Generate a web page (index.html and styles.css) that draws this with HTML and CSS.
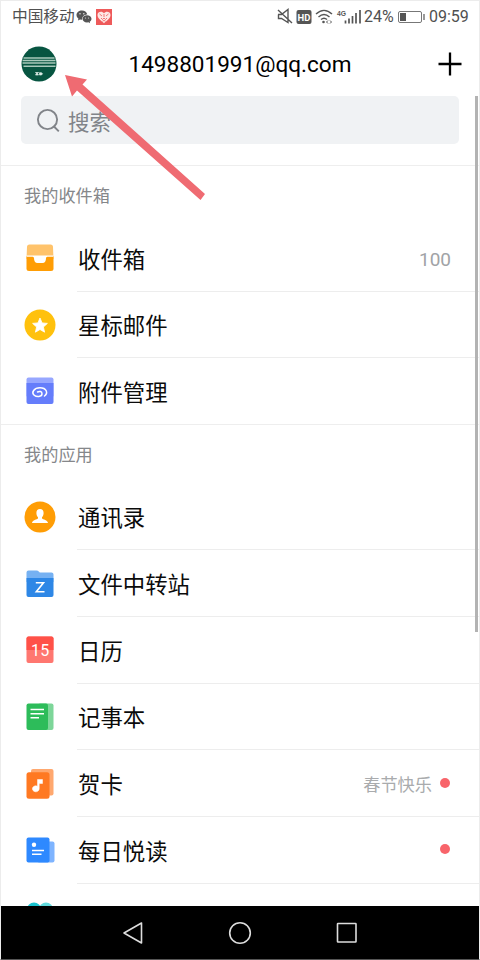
FILE: index.html
```html
<!DOCTYPE html>
<html lang="zh-CN">
<head>
<meta charset="utf-8">
<title>邮箱</title>
<link rel="stylesheet" href="styles.css">
</head>
<body>
<div class="phone">
  <div class="status">
    <span class="carrier">中国移动</span>
    <svg class="wechat" width="16" height="14" viewBox="0 0 16 14"><path d="M6 0.5C2.8.5.5 2.5.5 5c0 1.400.7 2.600 1.900 3.500L2 10.500l2-1.100 2 .3C6 6.500 8.300 4.600 11.300 4.500 10.700 2.100 8.600.5 6 .5Z" fill="#555"/><path d="M11 5.200c-2.600 0-4.500 1.600-4.500 3.600s1.900 3.700 4.500 3.700l1.400-.2 1.700 1-.4-1.500c1.100-.7 1.800-1.800 1.800-3 0-2-1.900-3.600-4.500-3.600Z" fill="#555"/><circle cx="4" cy="3.800" r=".8" fill="#ddd"/><circle cx="7.800" cy="3.800" r=".8" fill="#ddd"/><circle cx="9.500" cy="8" r=".6" fill="#ddd"/><circle cx="12.500" cy="8" r=".6" fill="#ddd"/></svg>
    <svg class="heart" width="16" height="16" viewBox="0 0 16 16"><rect width="16" height="16" fill="#ee5a5a"/><path d="M8 4.200C6.500 1.800 1.500 2 1.500 6c0 3.500 4 6 6.500 8.200C10.500 12 14.500 9.500 14.500 6 14.500 2 9.500 1.800 8 4.200Z" fill="#fde8e6"/><path d="m3.500 5 2.500 2m6.500-2L10 7M5 9l1.500 1.500L8 9l1.500 1.500L11 9M8 5v3M6.500 12.200l1.500-.8 1.500.8" stroke="#ee5a5a" stroke-width=".8" fill="none"/></svg>
    <span class="spring"></span>
    <svg class="signals" width="86" height="18" viewBox="0 0 86 18" fill="none" stroke="#555" stroke-width="1.400">
      <path d="M1 6.500h3.500L11 1.500v13L4.500 10.500H1.500V6.500M1 2l14 13"/>
      <rect x="19.500" y="2" width="15" height="14" rx="2" fill="#555" stroke="none"/><text x="27" y="12.500" class="hd">HD</text>
      <path d="M39 6c5-4.800 11-4.800 16 0M41.500 9c3.500-3.300 7.500-3.300 11 0M44 11.500c2-1.800 4-1.800 6 0"/><circle cx="46.500" cy="14" r="1.300" fill="#555" stroke="none"/><path d="m51 12.500-1.500 1.500 1.500 1.500m2-3 1.500 1.500-1.500 1.500" stroke-width="1"/>
      <text x="60" y="8" class="fg" textLength="9" lengthAdjust="spacingAndGlyphs">4G</text>
      <path d="M68.500 12.500v3M72 10.500v5M75.500 8v7.500M79 5v10.500M83 2v13.500" stroke-width="1.700"/>
    </svg>
    <span class="percent">24%</span>
    <svg class="battery" width="28" height="14" viewBox="0 0 28 14"><rect x="1.500" y="1.500" width="23" height="11" rx="1.500" fill="none" stroke="#777"/><rect x="3" y="3" width="6" height="8" fill="#555"/><path d="M27 4v6" stroke="#777" stroke-width="1.500"/></svg>
    <span class="time">09:59</span>
  </div>
  <header class="header">
    <svg class="avatar" width="36" height="36" viewBox="0 0 36 36"><circle cx="18" cy="18" r="17.500" fill="#075541"/><path d="M2.500 12h31M1.500 14.500h33M1.500 17h33M2.500 20.300h32" stroke="#a9c9bb" stroke-width="1.500"/><path d="M14.500 26.500h3l-1 1.200 1 1.300h-3l1-1.300zm4 .2h2l1 1.100-1 1.200h-2z" fill="#dcebe5" stroke="#dcebe5" stroke-width=".7"/></svg>
    <h1 class="account">1498801991@qq.com</h1>
    <svg class="plus" width="24" height="24" viewBox="0 0 24 24"><path d="M.5 12h23M12 .5v23" stroke="#000" stroke-width="2.300"/></svg>
  </header>
  <main class="content">
    <div class="search">
      <svg width="24" height="24" viewBox="0 0 24 24" fill="none" stroke="#818489" stroke-width="1.900"><circle cx="11.500" cy="11.500" r="9.600"/><path d="m17.500 18 5.300 5.300"/></svg>
      <span>搜索</span>
    </div>
    <section class="group">
      <h2>我的收件箱</h2>
      <div class="row">
        <svg class="icon" viewBox="0 0 32 32"><path d="M5.500 2.500h21Q29 2.500 29 5l.5 12h-27L3 5Q3 2.500 5.500 2.500Z" fill="#ffc36b"/><path d="M2.500 14h27v12.500Q29.500 29 27 29H5Q2.500 29 2.500 26.500Z" fill="#ff9d05"/><path d="M2.500 13.500h27v1.300h-6.200q-1.300 0-1.300 1.500 0 4.700-3.500 4.700h-5Q10 21 10 16.300q0-1.500-1.300-1.500H2.500Z" fill="#fff"/></svg>
        <span class="label">收件箱</span><span class="count">100</span>
      </div>
      <div class="row">
        <svg class="icon" viewBox="0 0 32 32"><circle cx="16" cy="16" r="15.500" fill="#ffc10d"/><path d="m16 9 2.100 4.900 5.300.5-4 3.600 1.200 5.200-4.600-2.700-4.600 2.700 1.200-5.200-4-3.600 5.300-.5Z" fill="#fff" stroke="#fff" stroke-width=".8" stroke-linejoin="round"/></svg>
        <span class="label">星标邮件</span>
      </div>
      <div class="row">
        <svg class="icon" viewBox="0 0 32 32"><rect x="2.500" y="2.500" width="27" height="20" rx="2" fill="#97a7ff"/><path d="M2.500 8h27v19q0 2-2 2h-23q-2 0-2-2Z" fill="#657dfb"/><path d="M20.500 21C24.500 18 22.500 12.800 16 12.800 10 12.800 7 17.500 10.200 20.200 12.300 22 18 22.300 18 18.800 18 16.300 15.500 16 13.500 17" fill="none" stroke="#fff" stroke-width="1.500" stroke-linecap="round"/></svg>
        <span class="label">附件管理</span>
      </div>
    </section>
    <section class="group">
      <h2>我的应用</h2>
      <div class="row">
        <svg class="icon" viewBox="0 0 32 32"><circle cx="16" cy="16" r="15.500" fill="#ff9d05"/><path d="M16 8c2.300 0 3.600 1.500 3.600 4 0 2-.7 3.200-1.600 4.200v1.300c.8 1 5.800 1.500 6 4.500H8c.2-3 5.200-3.500 6-4.500v-1.300c-.9-1-1.600-2.200-1.600-4.200 0-2.500 1.300-4 3.600-4Z" fill="#fff"/></svg>
        <span class="label">通讯录</span>
      </div>
      <div class="row">
        <svg class="icon" viewBox="0 0 32 32"><path d="M4.500 2.500h8q1.500 0 2.500 1.300l.8.700H27.500q2 0 2 2V14h-27V4.500q0-2 2-2Z" fill="#76b1f2"/><path d="M2.500 10h27v17q0 2-2 2h-23q-2 0-2-2Z" fill="#2e87e6"/><path d="M11.800 14.800h7.700L12.300 23.700h8.200" fill="none" stroke="#fff" stroke-width="1.600"/></svg>
        <span class="label">文件中转站</span>
      </div>
      <div class="row">
        <svg class="icon" viewBox="0 0 32 32"><rect x="2.500" y="2.500" width="27" height="26.500" rx="2" fill="#ff7770"/><path d="M4.500 2.500h23q2 0 2 2V16h-27V4.500q0-2 2-2Z" fill="#ff5148"/><text x="16.300" y="21.800" class="date">15</text></svg>
        <span class="label">日历</span>
      </div>
      <div class="row">
        <svg class="icon" viewBox="0 0 32 32"><rect x="14" y="2.500" width="15.500" height="26.500" rx="2" fill="#7dd699"/><rect x="2.500" y="2.500" width="21.500" height="26.500" rx="2" fill="#2dbc5a"/><path d="M6.500 8.500H20M6.500 12.700H20M6.500 16.800h8.500" stroke="#fff" stroke-width="1.400"/></svg>
        <span class="label">记事本</span>
      </div>
      <div class="row">
        <svg class="icon" viewBox="0 0 32 32"><rect x="7" y="1" width="22.500" height="26.500" rx="2" fill="#ffa86f"/><rect x="2.500" y="4.300" width="23" height="26.500" rx="2.500" fill="#ff7922"/><path d="M13.500 11.500h5v4h-3.300v5.200a3.400 3 0 1 1-1.700-2.500Z" fill="#fff" stroke="#fff" stroke-width=".5"/></svg>
        <span class="label">贺卡</span><span class="note">春节快乐</span><i class="dot"></i>
      </div>
      <div class="row">
        <svg class="icon" viewBox="0 0 32 32"><rect x="13" y="7.500" width="17.500" height="21" rx="2" fill="#7eb4ff"/><rect x="2.500" y="3.500" width="23" height="25" rx="2" fill="#2e89ff"/><circle cx="10" cy="10.700" r="2.200" fill="#fff"/><path d="M8 16.500h12M8 20.300h9.500" stroke="#fff" stroke-width="1.400"/></svg>
        <span class="label">每日悦读</span><i class="dot"></i>
      </div>
      <div class="row">
        <svg class="icon" viewBox="0 0 32 32"><circle cx="10" cy="8.500" r="7" fill="#19c3cf"/><circle cx="22" cy="8.500" r="7" fill="#61dadd"/></svg>
      </div>
    </section>
  </main>
  <nav class="nav">
    <svg width="22" height="24" viewBox="0 0 22 24"><path d="M19.500 2v20L2 12Z"/></svg>
    <svg width="24" height="24" viewBox="0 0 24 24"><circle cx="12" cy="12" r="10.300"/></svg>
    <svg width="22" height="22" viewBox="0 0 22 22"><rect x="1.500" y="1.500" width="18.500" height="18.500" rx=".5"/></svg>
  </nav>
  <div class="scrollbar"></div>
  <svg class="pointer" width="142" height="128" viewBox="0 0 142 128"><path d="M0 0 22 4.500 17.500 9.500 140 119 135.500 125 12 15.500 7 21.500Z" fill="#ef6b72"/></svg>
</div>
</body>
</html>
```
FILE: styles.css
```css
* { box-sizing: border-box; }
body { margin: 0; background: #fff; font-family: Roboto, "Noto Sans CJK SC", sans-serif; color: #0b0b0b; }
h1, h2 { margin: 0; font-weight: 400; }
svg { flex: none; display: block; }
.phone { position: relative; width: 480px; height: 960px; overflow: hidden; display: flex; flex-direction: column; border: 1px solid #ececec; border-bottom-color: #555; }
.status { flex: none; height: 31px; display: flex; align-items: center; padding: 0 10px 0 11px; font-size: 16px; color: #505050; white-space: nowrap; }
.carrier { font-size: 15.7px; line-height: 20px; width: 63px; padding-top: 1px; }
.wechat { margin-left: 1px; }
.heart { margin-left: 4px; }
.spring { flex: 1; }
.signals { margin-right: 1px; }
.percent { width: 31px; }
.battery { margin: 0 4px 0 2px; }
.time { width: 40px; }
.hd { font: 700 9.5px Roboto, sans-serif; fill: #fff; stroke: none; text-anchor: middle; }
.fg { font: 700 8px "Liberation Sans", sans-serif; fill: #555; stroke: none; }
.header { flex: none; height: 64px; display: flex; align-items: center; justify-content: space-between; padding: 0 17px 0 20px; }
.account { width: 224px; font-size: 22.55px; line-height: 30px; color: #000; margin-right: 14px; padding-top: 2px; white-space: nowrap; }
.content { flex: 1; min-height: 0; overflow: hidden; }
.search { height: 48px; margin: 0 20px 21px; padding: 0 15px; border-radius: 5px; background: #f0f2f4; display: flex; align-items: center; gap: 8px; font-size: 21.5px; color: #818489; }
.group h2 { height: 59.5px; border-top: 1px solid #eee; padding: 0 23px; font-size: 17.2px; line-height: 61px; color: #85878a; }
.group + .group h2 { height: 59px; line-height: 60px; }
.row { height: 66.7px; display: flex; align-items: center; padding: 1px 28px 0 23px; font-size: 22.4px; position: relative; }
.group:first-of-type .row { height: 66.5px; }
.row::after { content: ""; position: absolute; left: 76px; right: 0; bottom: -.5px; height: 1px; background: #ededed; }
.row:last-child::after { display: none; }
.icon { width: 32px; height: 32px; margin-right: 22px; }
.label { flex: 1; line-height: 32px; padding-top: 3px; }
.count { font-size: 19px; color: #a1a3a6; padding-top: 2px; }
.note { font-size: 17.2px; color: #a9abad; margin-right: 8px; }
.dot { width: 10px; height: 10px; border-radius: 50%; background: #f8646a; margin: -2px 1px 0 0; }
.date { font: 16px Roboto, sans-serif; fill: #fff; text-anchor: middle; letter-spacing: .3px; }
.nav { flex: none; height: 53px; background: #000; display: flex; align-items: center; justify-content: center; gap: 84px; }
.nav svg { fill: none; stroke: #ddd; stroke-width: 1.6; stroke-linejoin: round; }
.scrollbar { position: absolute; left: 474px; top: 95px; width: 3px; height: 536px; background: #b3b3b3; }
.pointer { position: absolute; left: 64px; top: 74px; }
```
